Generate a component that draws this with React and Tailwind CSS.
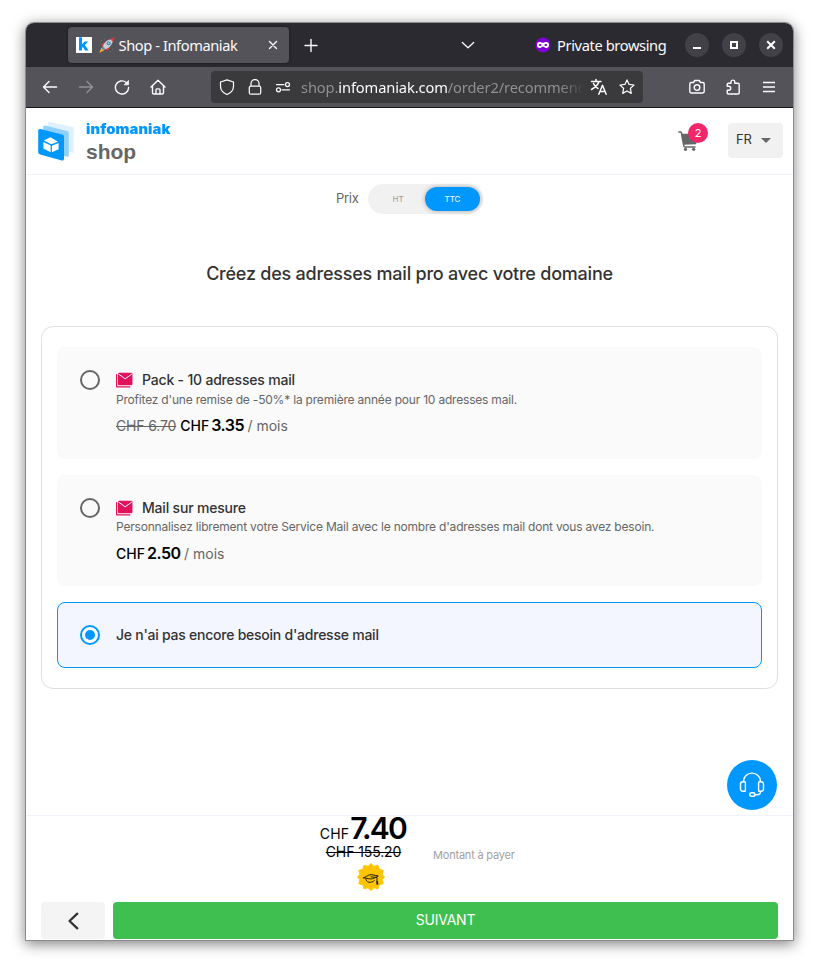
import React from 'react';

function Svg({ children, className = 'size-4', box = '0 0 16 16', sw = 1.25 }) {
  return (
    <svg viewBox={box} className={'shrink-0 ' + className} fill="none" stroke="currentColor" strokeWidth={sw} strokeLinecap="round" strokeLinejoin="round">
      {children}
    </svg>
  );
}

function Rocket() {
  return (
    <svg viewBox="0 0 16 16" className="ml-[7px] size-4 shrink-0">
      <path d="M5.200 5.800 1.300 9.600l3.300-.2zM10.200 10.800 6.600 14.700l.2-3.500z" fill="#c62828" />
      <path d="M2.600 10.600.3 15.700l5-2.400z" fill="#ffb02e" />
      <path d="M5.300 5.300 1.800 8.300 4 8.800l3.200 3.200.6 2.200 3-3.500z" fill="#e0393e" />
      <path d="M3.600 10.400C4.600 6 8 2.800 12.600 2l1.400 1.400C13.200 8 9.900 11.400 5.600 12.400z" fill="#c3d0d9" />
      <path d="M4.100 9.600 6.400 11.900 4.200 13.200 2.800 11.800z" fill="#7b8790" />
      <path d="M11.200 2.200C12.800 1.300 14.600.5 15.700.3c-.2 1.100-1 2.900-1.900 4.500z" fill="#e0393e" />
      <circle cx="9.700" cy="6.300" r="1.900" fill="#3f6f95" />
      <circle cx="9.700" cy="6.300" r="1.100" fill="#8fd3f5" />
      <path d="M2 3.500h.6M5 2h.6M13.500 12h.6M11 14.500h.6M1.500 6h.4" stroke="#9b9ba5" strokeWidth=".7" />
    </svg>
  );
}

function TabBar() {
  return (
    <div className="flex h-11 items-center bg-[#2b2a30] text-[#fbfbfe]">
      <div className="ml-[42px] flex h-9 w-[221px] items-center rounded bg-[#54535a] pl-2 shadow-[0_0_3px_rgba(0,0,0,.5)]">
        <svg viewBox="0 0 16 16" className="size-4 shrink-0">
          <rect width="16" height="16" fill="#fff" />
          <path d="M3 .3h3v7l2.600-2.900h3.600L8.900 8l3.700 5.500H9.100L6.900 10.100 6 11v2.500H3z" fill="#0098ff" />
        </svg>
        <Rocket />
        <span className="ml-[3.5px] w-[127.5px] whitespace-nowrap text-[14.67px] leading-5 tracking-[-0.42px]">Shop - Infomaniak</span>
        <Svg className="ml-[18.5px] size-4" sw={1.400}><path d="M4.500 4.500l7 7M11.500 4.500l-7 7" /></Svg>
      </div>
      <Svg className="ml-[14px] size-4" sw={1.400}><path d="M8 2.500v12M2 8.500h12" /></Svg>
      <Svg className="ml-[141px] size-4" sw={1.300}><path d="M2.300 5.500 8 10.800l5.700-5.300" /></Svg>
      <svg viewBox="0 0 16 16" className="ml-[59px] size-4 shrink-0">
        <circle cx="8" cy="8" r="7.600" fill="#7f00d6" />
        <path d="M1.900 7.800C2 5.600 3.300 5 4.700 5 6.100 5 7 5.800 8 5.800S9.900 5 11.300 5c1.400 0 2.700.6 2.800 2.800-.1 2.200-1.400 3.200-2.800 3.200-1.600 0-2.300-1.400-3.300-1.400S6.300 11 4.700 11C3.300 11 2 10 1.900 7.800z" fill="#fff" />
        <ellipse cx="5.200" cy="8" rx="1.400" ry="1" fill="#7f00d6" />
        <ellipse cx="10.800" cy="8" rx="1.400" ry="1" fill="#7f00d6" />
      </svg>
      <span className="w-[116px] shrink-0 whitespace-nowrap pl-[6px] text-[14.67px] tracking-[-0.38px]">Private browsing</span>
      <div className="ml-[18px] flex gap-[13px] text-white">
        <span className="flex size-6 items-center justify-center rounded-full bg-[#424148]"><Svg sw={2}><path strokeLinecap="butt" d="M4 11h8" /></Svg></span>
        <span className="flex size-6 items-center justify-center rounded-full bg-[#424148]"><Svg sw={2}><path strokeLinejoin="miter" d="M5 5h6v6H5z" /></Svg></span>
        <span className="flex size-6 items-center justify-center rounded-full bg-[#424148]"><Svg sw={2}><path strokeLinecap="butt" d="M4.200 4.200l7.600 7.600M11.800 4.200l-7.600 7.600" /></Svg></span>
      </div>
    </div>
  );
}

function NavBar() {
  return (
    <div className="flex h-[41px] items-center border-b border-[#19191c] bg-[#54535a] pl-4 text-[#fbfbfe]">
      <Svg sw={1.400}><path d="M14.600 8H1.500M7 2.500 1.500 8 7 13.500" /></Svg>
      <Svg className="ml-5 size-4 text-[#929197]" sw={1.400}><path d="M1.400 8h13.100M9 2.500 14.500 8 9 13.500" /></Svg>
      <Svg className="ml-5 size-4" sw={1.400}><path d="M14.600 8.500A6.600 6.600 0 1 1 12 3.200" /><path fill="currentColor" d="M14.500 1.800v4h-4z" strokeWidth=".8" /></Svg>
      <Svg className="ml-5 size-4" sw={1.400}><path d="M1 8 8 1.200 15 8M2.500 6.800v6.700c0 .9.500 1.500 1.400 1.500h8.200c.9 0 1.400-.6 1.400-1.500V6.800M6 15v-4c0-.7.400-1.100 1-1.100h2c.6 0 1 .4 1 1.100v4" /></Svg>
      <div className="ml-[45px] flex h-8 w-[432px] items-center rounded bg-[#3a393b] pl-2">
        <Svg><path d="M8 .8 14.500 3v4c0 3.800-2.500 7-6.500 8.500C4 14 1.500 10.800 1.500 7V3z" /></Svg>
        <Svg className="ml-3 size-4"><path d="M4 7V4.500a4 4 0 0 1 8 0V7M3.800 7h8.400c1 0 1.500.5 1.500 1.500v5.200c0 1-.5 1.500-1.500 1.500H3.800c-1 0-1.500-.5-1.500-1.500V8.500C2.300 7.500 2.800 7 3.800 7z" /></Svg>
        <Svg className="ml-3 size-4"><path d="M1.500 5.500h7.500M7 10.800h7.500" /><circle cx="12.500" cy="5.500" r="2" /><circle cx="3.500" cy="10.800" r="2" /></Svg>
        <span className="ml-2.5 w-[283px] overflow-hidden whitespace-nowrap text-[14.67px] leading-6 tracking-[-0.12px] text-[#8f8f94] [mask-image:linear-gradient(to_left,transparent,black_24px)]">shop.<span className="text-[#fbfbfe]">infomaniak.com</span>/order2/recommend</span>
        <Svg className="ml-1.5 size-[18px]" box="0 0 18 18" sw={1.500}><path d="M1.500 3.500h9.500M6 1.500v2M9 3.500C8 7 5 9.500 1.500 11.500M3.500 5.500C4.500 8 6 9.500 8 10.500M8.800 16.300l3.700-9 3.700 9M10 13.500h5" /></Svg>
        <Svg className="ml-[11px] size-4"><path d="m8 .9 2.100 4.500 4.900.6-3.600 3.400.9 5L8 12l-4.300 2.400.9-5L1 6l4.900-.6z" /></Svg>
      </div>
      <Svg className="ml-[46px] size-4" sw={1.400}><path d="M2.200 3.500h2.300L5.800 1.500h4.400l1.300 2h2.300c.9 0 1.400.5 1.400 1.400v7.700c0 .9-.5 1.400-1.400 1.400H2.200C1.300 14 .8 13.500.8 12.600V4.900c0-.9.5-1.400 1.400-1.400z" /><circle cx="8" cy="8.600" r="2.800" /></Svg>
      <Svg className="ml-5 size-4" sw={1.400}><path d="M2.200 7.200V5.500c0-.8.400-1.200 1.200-1.200H6V3a1.900 1.900 0 0 1 3.800 0v1.300H13c.8 0 1.200.4 1.200 1.200v8.300c0 .8-.4 1.200-1.200 1.200H3.400c-.8 0-1.200-.4-1.200-1.200v-2.600h1.500a2 2 0 0 0 0-4z" /></Svg>
      <Svg className="ml-5 size-4" sw={1.400}><path strokeLinecap="butt" d="M2 3.500h12M2 8h12M2 12.500h12" /></Svg>
    </div>
  );
}

function ShopHeader() {
  return (
    <header className="flex h-[67px] border-b border-[#f0f3fe]">
      <svg viewBox="0 0 36 40" className="ml-3 mt-[13px] h-10 w-9 shrink-0">
        <path d="M10 1.500C10 .8 10.500.500 11 .7L34.500 6c.9.300 1.300.8 1.300 1.600v23.200c0 .8-.5 1.200-1.300 1L10 26z" fill="#dff1ff" />
        <path d="M5.200 6c0-1.200.8-1.900 2-1.500L29 10c1.200.4 1.800 1 1.800 2.300v22c0 1.200-.8 1.800-1.800 1.500L5.200 30z" fill="#8fd0ff" />
        <path d="M.2 10c0-1.500.8-2.300 2.200-1.900L24 13.500c1.400.4 2 1 2 2.400v21.800c0 1.500-.8 2.100-2.200 1.700L2.200 33.500c-1.400-.4-2-1-2-2.400z" fill="#0098ff" />
        <path d="m5.800 19.500 6.700-3.300 7.500 4.500-6.700 2.600zM5.400 21.100l7.200 3.400v6.800l-7.200-3.700zM20.600 22.100l-6.700 2.600v6.600l6.700-3z" fill="#fff" />
      </svg>
      <div className="ml-3 mt-[14px] w-[200px] shrink-0">
        <div className="origin-left scale-x-[1.09] whitespace-nowrap font-['Inter'] text-[13.5px] font-black leading-[14px] tracking-[0.1px] text-[#0098ff]">infomaniak</div>
        <div className="mt-[4px] font-['Liberation_Sans'] text-[21px] font-bold leading-6 text-[#666]">shop</div>
      </div>
      <div className="relative ml-[392px] mt-[15px] h-8 w-[32px] shrink-0">
        <svg viewBox="0 0 20 20" className="absolute left-0 top-[8px] size-5" fill="none" stroke="#666">
          <path d="M.3 1h2.200c.6 0 .8.200.9.800L5.800 15c.1.700.4 1 1 1h10.700" strokeWidth="1.500" />
          <path d="M3.500 2.800h16L18.200 13.200 5.600 13.800z" fill="#666" stroke="none" />
          <circle cx="7.500" cy="18.300" r="1.600" fill="#666" stroke="none" />
          <circle cx="15.700" cy="18.300" r="1.600" fill="#666" stroke="none" />
        </svg>
        <span className="absolute left-[10px] top-0 flex size-5 items-center justify-center rounded-full bg-[#f02769] text-[11px] text-white">2</span>
      </div>
      <div className="ml-[18px] mt-[15px] flex h-[35px] w-[55px] shrink-0 items-center rounded bg-[#f1f1f1] pb-[2px] pl-2 text-[13px] leading-none tracking-[-0.2px] text-[#333]">
        <span className="w-[17px]">FR</span>
        <span className="ml-[8px] mt-px border-x-[5px] border-t-[5px] border-x-transparent border-t-[#666]" />
      </div>
    </header>
  );
}

function MailIcon() {
  return (
    <svg viewBox="0 0 17 16" className="mt-px h-4 w-[17px] shrink-0">
      <path d="M.6 2.500v12.300H13.800" fill="none" stroke="#e0145c" strokeWidth="1.200" strokeLinejoin="round" strokeLinecap="round" />
      <rect x="2" y=".800" width="14.500" height="12.500" rx="1.200" fill="#e0145c" />
      <path d="m2.500 2 6.700 4.800L15.900 2" fill="none" stroke="#fff" strokeWidth="1" />
    </svg>
  );
}

function Radio({ on }) {
  return (
    <span className={on ? 'flex size-5 shrink-0 items-center justify-center rounded-full border-2 border-[#0098ff] bg-white' : 'size-5 shrink-0 rounded-full border-2 border-[#666]'}>
      {on && <span className="size-2.5 rounded-full bg-[#0098ff]" />}
    </span>
  );
}

function Offer({ title, text, old, price, height, gap, rowGap }) {
  return (
    <div className={'flex rounded-lg bg-[#fafafa] pl-[23px] pt-[23px] ' + height}>
      <Radio />
      <div className="ml-4">
        <div className={'flex h-[19px] items-center ' + gap}>
          <MailIcon />
          <span className="ml-[9px] whitespace-nowrap text-[14px] font-medium tracking-[-0.19px] text-[#333]">{title}</span>
        </div>
        <div className="whitespace-nowrap text-[12px] leading-[18px] tracking-[-0.2px] text-[#666]">{text}</div>
        <div className={'flex h-7 items-baseline whitespace-nowrap text-[14px] leading-7 text-[#666] ' + rowGap}>
          {old && <span className="mr-1 tracking-[-0.15px] line-through">{old}</span>}
          <span className="font-medium text-black">CHF</span>
          <span className="ml-[2px] text-[16px] font-semibold tracking-[-0.5px] text-black">{price}</span>
          <span className="ml-[3.5px]">/ mois</span>
        </div>
      </div>
    </div>
  );
}

function Main() {
  return (
    <main className="flex h-[640px] flex-col">
      <div className="mt-[9px] flex h-[30px] items-center justify-center">
        <span className="w-8 pb-px text-[13px] leading-none tracking-[-0.3px] text-[#666]">Prix</span>
        <div className="flex h-[30px] w-[115px] items-center rounded-full bg-[#f1f1f1] text-[8px] leading-none">
          <span className="w-[57px] pl-[3px] text-center text-[#999]">HT</span>
          <span className="flex h-6 w-[55px] items-center justify-center rounded-full bg-[#0098ff] text-white shadow-[0_0_5px_rgba(0,0,0,.3)]">TTC</span>
        </div>
      </div>
      <h1 className="mt-[48px] text-center text-[18px] font-medium leading-6 tracking-[-0.225px] text-[#333]">Créez des adresses mail pro avec votre domaine</h1>
      <section className="mx-[15px] mt-10 flex h-[363px] flex-col rounded-xl border border-[#dfdfdf] px-[15px] pt-5">
        <Offer height="h-28" gap="mb-[2px]" rowGap="mt-[2px]" title="Pack - 10 adresses mail" text="Profitez d'une remise de -50%* la première année pour 10 adresses mail." old="CHF 6.70" price="3.35" />
        <Offer height="mt-4 h-[111px]" gap="mb-px" rowGap="mt-[3px]" title="Mail sur mesure" text="Personnalisez librement votre Service Mail avec le nombre d'adresses mail dont vous avez besoin." price="2.50" />
        <div className="mt-4 flex h-[66px] items-center rounded-lg border border-[#0098ff] bg-[#f3f6ff] pl-[22px]">
          <Radio on />
          <span className="ml-4 whitespace-nowrap pb-px text-[14px] font-medium tracking-[-0.24px] text-[#333]">Je n'ai pas encore besoin d'adresse mail</span>
        </div>
      </section>
      <div className="mr-4 mt-[71px] flex size-[50px] shrink-0 items-center justify-center self-end rounded-full bg-[#0098ff] text-white">
        <Svg className="size-[26px]" box="0 0 26 26" sw={1.400}>
          <path d="M4.500 9.500v-.2a8.500 8.200 0 0 1 17 0v.2" />
          <path d="M3.800 9.700h1.700c.5 0 .9.400.9.900v7.800c0 .5-.4.900-.9.900H3.800c-1.400 0-2.300-1-2.300-2.400v-4.800c0-1.400.9-2.400 2.300-2.400zM22.200 9.700h-1.700c-.5 0-.9.400-.9.900v7.800c0 .5.400.9.900.9h1.700c1.400 0 2.300-1 2.300-2.400v-4.800c0-1.400-.9-2.400-2.300-2.400zM21.500 19.500c0 2.300-1.400 3.200-3.500 3.200h-2" />
          <rect x="10.800" y="20.700" width="5.200" height="3.600" rx="1.800" />
        </Svg>
      </div>
    </main>
  );
}

function Badge() {
  return (
    <svg viewBox="0 0 28 28" className="size-7 shrink-0">
      <path d="m14 .500 3 2.900 4-1.100 1.100 4 4.100 1.100-1.100 4 2.400 2.600-2.400 2.700 1.100 4-4.100 1.100-1.100 4-4-1.100-3 2.900-3-2.900-4 1.100-1.100-4-4.100-1.100 1.100-4L.5 14l2.400-2.600-1.100-4 4.100-1.100 1.100-4 4 1.100z" fill="#ffc400" stroke="#ffc400" strokeWidth="1" strokeLinejoin="round" />
      <path d="M6.500 14.800c2.500-.6 4-2.500 6.500-3s5 .8 8.300 1.200c-2.500.8-3.600 2.300-5.800 2.800-3 .6-5.500-.8-9-1zM8.800 15.500c.2 2 1 3.300 3 3.700 2 .4 4-.2 5.500-1.500M14 13.800l6 .8v4.400" fill="none" stroke="#222" strokeWidth="1" strokeLinejoin="round" strokeLinecap="round" />
      <path d="M19.200 18.200h1.800l.4 3.600h-1.800z" fill="#222" />
    </svg>
  );
}

function Footer() {
  return (
    <footer className="flex h-[125px] flex-col border-t border-[#f0f3fe] text-black">
      <div className="flex h-[86px]">
        <div className="ml-[292px] flex w-[90px] flex-col items-center">
          <div className="flex h-[25px] items-baseline whitespace-nowrap leading-[25px]">
            <span className="text-[14px] tracking-[0.15px]">CHF</span>
            <span className="ml-px text-[30px] font-semibold tracking-[-1.7px]">7.40</span>
          </div>
          <span className="whitespace-nowrap pl-px text-[14px] leading-[22px] tracking-[-0.1px] line-through">CHF 155.20</span>
          <span className="ml-[15px]"><Badge /></span>
        </div>
        <span className="ml-[25px] mt-[31px] whitespace-nowrap text-[11px] leading-4 tracking-[-0.2px] text-[#9f9f9f]">Montant à payer</span>
      </div>
      <div className="flex gap-2 px-[15px]">
        <button className="flex h-[37px] w-16 items-center justify-center rounded-sm bg-[#f4f4f4] text-[#333]">
          <Svg className="size-5" box="0 0 20 20" sw={2.300}><path d="M14.300 2.700 6.500 10l7.800 7.300" /></Svg>
        </button>
        <button className="h-[37px] flex-1 rounded bg-[#3fbf4f] pb-[2px] text-[14px] tracking-[-0.25px] text-white">SUIVANT</button>
      </div>
    </footer>
  );
}

export default function App() {
  return (
    <div className="h-[969px] w-[819px] overflow-hidden bg-white pl-[25px] pt-[22px]">
      <div className="w-[769px] overflow-hidden rounded-t-[9px] border border-[#8c8c8c] bg-white shadow-[0_3px_14px_rgba(0,0,0,.5)]">
        <div className="font-['Noto_Sans',sans-serif]">
          <TabBar />
          <NavBar />
        </div>
        <div className="font-['Inter',sans-serif]">
          <ShopHeader />
          <Main />
          <Footer />
        </div>
      </div>
    </div>
  );
}
